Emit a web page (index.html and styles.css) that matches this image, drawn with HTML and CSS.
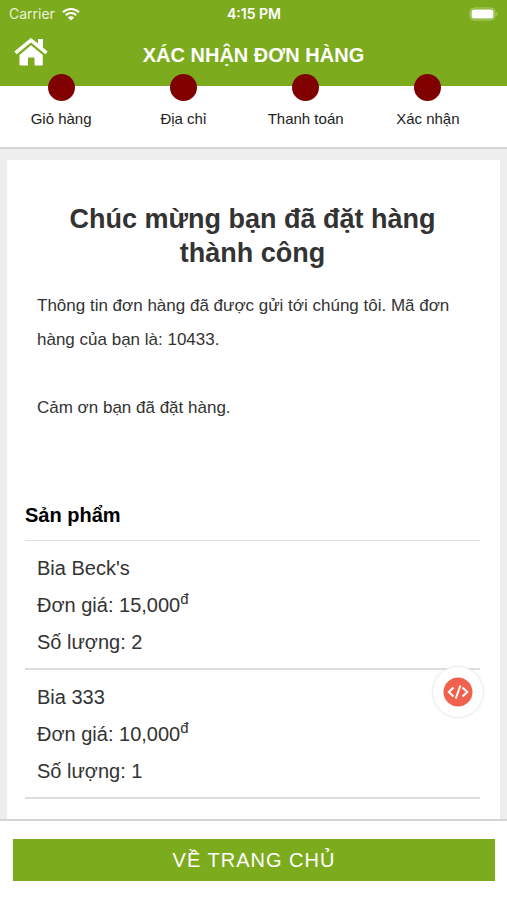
FILE: index.html
```html
<!DOCTYPE html>
<html lang="vi">
<head>
<meta charset="utf-8">
<meta name="viewport" content="width=device-width, initial-scale=1">
<title>Xác nhận đơn hàng</title>
<link rel="stylesheet" href="styles.css">
</head>
<body>
<header class="top">
  <div class="status">
    <div class="carrier">
      <span>Carrier</span>
      <svg class="wifi" viewBox="0 0 18 14" aria-hidden="true">
        <path d="M1 5.2a11.6 11.6 0 0 1 16 0M3.8 8.1a7.5 7.500 0 0 1 10.4 0" fill="none" stroke="currentColor" stroke-width="2.2"/>
        <path d="M9 13.6 5.9 10.5a4.4 4.4 0 0 1 6.2 0z" fill="currentColor"/>
      </svg>
    </div>
    <span class="clock">4:15 PM</span>
    <svg class="battery" viewBox="0 0 30 14" aria-hidden="true">
      <rect x="1" y="1" width="25" height="12" rx="4" fill="none" stroke="#b0cf70"/>
      <rect x="2.5" y="2.5" width="22" height="9" rx="2.5" fill="#fff"/>
      <path d="M27.5 5v4c1.600-.6 1.600-3.400 0-4z" fill="#b0cf70"/>
    </svg>
  </div>
  <div class="bar">
    <a class="home" href="#" aria-label="Trang chủ">
      <svg viewBox="0 0 34 28" aria-hidden="true">
        <path d="M1.500 14.800 17 2.200l15.500 12.600" fill="none" stroke="currentColor" stroke-width="3.600"/>
        <path d="M24 1h5v9.500l-5-4z" fill="currentColor"/>
        <path d="M17 7.200 28.800 17v9.600q0 1-1 1H20.500v-8h-6.500v8H6.500q-1 0-1-1V17z" fill="currentColor"/>
      </svg>
    </a>
    <h1 class="title">XÁC NHẬN ĐƠN HÀNG</h1>
  </div>
</header>

<ol class="steps">
  <li class="step">Giỏ hàng</li>
  <li class="step">Địa chỉ</li>
  <li class="step">Thanh toán</li>
  <li class="step">Xác nhận</li>
</ol>

<main class="content">
  <section class="card">
    <h2 class="congrats">Chúc mừng bạn đã đặt hàng thành công</h2>
    <p class="message">Thông tin đơn hàng đã được gửi tới chúng tôi. Mã đơn hàng của bạn là: 10433.</p>
    <p class="message">Cảm ơn bạn đã đặt hàng.</p>
    <h3 class="subtitle">Sản phẩm</h3>
    <ul class="products">
      <li class="product">
        <div>Bia Beck's</div>
        <div>Đơn giá: 15,000<sup>đ</sup></div>
        <div>Số lượng: 2</div>
      </li>
      <li class="product">
        <div>Bia 333</div>
        <div>Đơn giá: 10,000<sup>đ</sup></div>
        <div>Số lượng: 1</div>
      </li>
    </ul>
  </section>
</main>

<footer class="footer">
  <button class="dev" type="button" aria-label="Mã nguồn">
    <svg viewBox="0 0 30 30" aria-hidden="true">
      <circle cx="15" cy="15" r="14.500" fill="#f0624d"/>
      <path d="M10.500 10.500 5.800 15l4.700 4.500M19.500 10.500l4.700 4.500-4.700 4.500M17.400 8.500 12.800 21.500" fill="none" stroke="#fff" stroke-width="2"/>
    </svg>
  </button>
  <button class="back" type="button">VỀ TRANG CHỦ</button>
</footer>
</body>
</html>
```
FILE: styles.css
```css
* {
  box-sizing: border-box;
}

body {
  margin: 0;
  min-height: 100vh;
  display: flex;
  flex-direction: column;
  background: #fff;
  color: #333;
  font-family: "Liberation Sans", Arial, sans-serif;
}

.top {
  background: #7dab1e;
  color: #fff;
}

.status {
  display: grid;
  grid-template-columns: 1fr auto 1fr;
  align-items: center;
  height: 27px;
  padding: 0 8px 0 9px;
  font: 14px/27px Inter, sans-serif;
}

.carrier {
  display: flex;
  align-items: center;
  gap: 7px;
  color: #e9f2d6;
}

.wifi {
  width: 18px;
  height: 14px;
  color: #fff;
}

.clock {
  font-weight: 600;
}

.battery {
  width: 30px;
  height: 14px;
  justify-self: end;
}

.bar {
  display: grid;
  grid-template-columns: 1fr auto 1fr;
  align-items: center;
  height: 59px;
  padding: 0 14px 4px;
}

.home {
  display: block;
  width: 34px;
  height: 28px;
  margin-bottom: 6px;
  color: #fff;
}

.home svg {
  display: block;
}

.title {
  margin: 0;
  font-size: 20px;
  line-height: 24px;
}

.steps {
  display: flex;
  margin: 0;
  padding: 0 18px 19px 0;
  border-bottom: 2px solid #d4d4d4;
  list-style: none;
}

.step {
  flex: 1;
  display: flex;
  flex-direction: column;
  align-items: center;
  gap: 9px;
  margin-top: -12px;
  color: #222;
  font-size: 15px;
  line-height: 18px;
}

.step::before {
  content: "";
  width: 27px;
  height: 27px;
  border-radius: 50%;
  background: #800000;
}

.content {
  flex: 1;
  display: flex;
  padding: 11px 7px 0;
  background: #eee;
}

.card {
  flex: 1;
  padding: 42px 20px 0 18px;
  background: #fff;
}

.congrats {
  margin: 0 12px 19px;
  font-size: 27px;
  line-height: 34px;
  text-align: center;
}

.message {
  margin: 0 12px 34px;
  font-size: 17px;
  line-height: 34px;
}

.subtitle {
  margin: 78px 0 0;
  padding-bottom: 13px;
  border-bottom: 1px solid #ddd;
  color: #000;
  font-size: 20px;
  line-height: 24px;
}

.products {
  margin: 0;
  padding: 0;
  list-style: none;
}

.product {
  padding: 9px 12px 7px;
  border-bottom: 2px solid #ddd;
  font-size: 20px;
  line-height: 37px;
}

.product sup {
  font-size: 15px;
  line-height: 0;
}

.footer {
  position: sticky;
  bottom: 0;
  padding: 18px 12px 19px 13px;
  border-top: 2px solid #d4d4d4;
  background: #fff;
}

.back {
  display: block;
  width: 100%;
  padding: 9px;
  border: 0;
  background: #7dab1e;
  color: #fff;
  font: 20px/24px "Liberation Sans", Arial, sans-serif;
  letter-spacing: 1px;
}

.dev {
  position: absolute;
  right: 23px;
  bottom: 182px;
  display: grid;
  place-items: center;
  width: 52px;
  height: 52px;
  padding: 0;
  border: 1px solid #eee;
  border-radius: 50%;
  background: #fff;
  box-shadow: 0 0 2px #0001;
}

.dev svg {
  width: 30px;
  height: 30px;
}
```
